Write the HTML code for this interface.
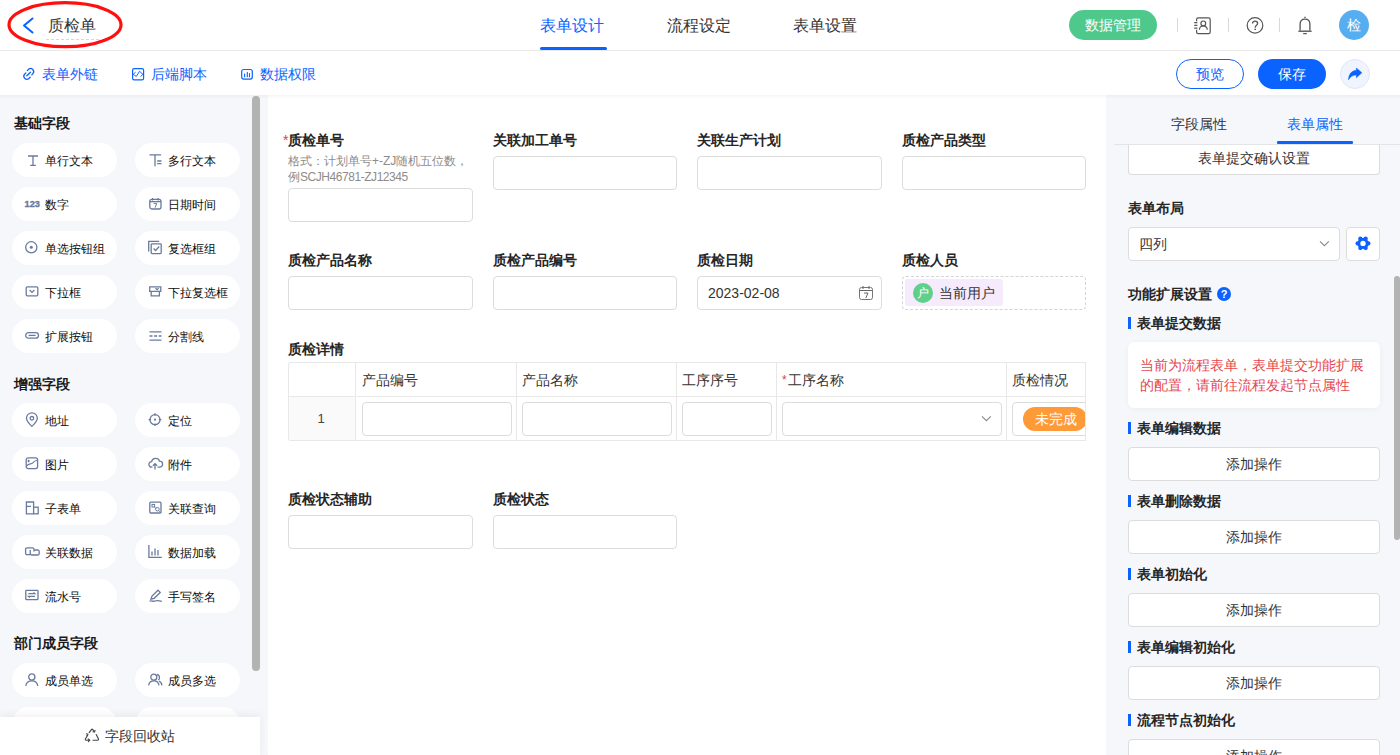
<!DOCTYPE html>
<html><head><meta charset="utf-8">
<style>
*{box-sizing:border-box;margin:0;padding:0}
html,body{width:1400px;height:755px;overflow:hidden;background:#fff;font-family:"Liberation Sans",sans-serif;color:#333}
.a{position:absolute;white-space:nowrap}
svg{position:absolute;overflow:visible}
#hdr{position:absolute;left:0;top:0;width:1400px;height:51px;background:#fff;border-bottom:1px solid #ececec}
#tb{position:absolute;left:0;top:51px;width:1400px;height:44px;background:#fff;z-index:3;box-shadow:0 1px 4px rgba(0,0,0,0.06)}
#left{position:absolute;left:0;top:95px;width:268px;height:660px;background:#f5f7fb;overflow:hidden}
#canvas{position:absolute;left:268px;top:95px;width:838px;height:660px;background:#fff;overflow:hidden}
#right{position:absolute;left:1106px;top:95px;width:294px;height:660px;background:#f5f7fb;overflow:hidden}
.t16{font-size:16px;line-height:20px;height:20px}
.t14{font-size:14px;line-height:20px;height:20px}
.t12{font-size:12px;line-height:16px;height:16px}
.b{font-weight:bold}
.blue{color:#0a62ff}
.pill{position:absolute;width:105px;height:34px;border-radius:17px;background:#fff}
.pill span{position:absolute;left:33px;top:10px;font-size:12px;line-height:16px;color:#0d0d0d;white-space:nowrap}
.pill svg{left:0;top:0}
.inp{position:absolute;height:34px;border:1px solid #dcdcdc;border-radius:4px;background:#fff}
.lbl{position:absolute;font-size:14px;line-height:20px;font-weight:bold;color:#262626;white-space:nowrap}
.btn{position:absolute;left:22px;width:252px;height:34px;border:1px solid #dcdcdc;border-radius:4px;background:#fff;font-size:14px;line-height:32px;text-align:center;color:#333}
.sec{position:absolute;left:22px;font-size:14px;line-height:20px;font-weight:bold;color:#262626;padding-left:9px;white-space:nowrap}
.sec:before{content:"";position:absolute;left:0;top:4px;width:3px;height:12px;background:#0a62ff}
</style></head><body>

<!-- HEADER -->
<div id="hdr">
  <svg width="130" height="52" style="left:0;top:0">
    <ellipse cx="65" cy="24.7" rx="56" ry="22" fill="none" stroke="#ff1010" stroke-width="3.2"/>
    <path d="M32.5 18.5 L24 25.5 L32.5 32.5" fill="none" stroke="#0a62ff" stroke-width="2" stroke-linecap="round" stroke-linejoin="round"/>
    <line x1="46" y1="39.5" x2="102" y2="39.5" stroke="#d8d8d8" stroke-width="1" stroke-dasharray="3 2"/>
  </svg>
  <div class="a t16" style="left:48px;top:16px;color:#333">质检单</div>

  <div class="a t16 blue" style="left:540px;top:16px">表单设计</div>
  <div style="position:absolute;left:540px;top:47px;width:67px;height:3px;border-radius:2px;background:#0a62ff"></div>
  <div class="a t16" style="left:667px;top:16px;color:#333">流程设定</div>
  <div class="a t16" style="left:793px;top:16px;color:#333">表单设置</div>

  <div style="position:absolute;left:1069px;top:10px;width:88px;height:30px;border-radius:15px;background:#4ec98b"></div>
  <div class="a t14" style="left:1085px;top:15px;color:#fff">数据管理</div>
  <div style="position:absolute;left:1177px;top:18px;width:1px;height:14px;background:#d8d8d8"></div>
  <div style="position:absolute;left:1228px;top:18px;width:1px;height:14px;background:#d8d8d8"></div>
  <div style="position:absolute;left:1279px;top:18px;width:1px;height:14px;background:#d8d8d8"></div>
  <!-- contact book -->
  <svg width="20" height="20" style="left:1193px;top:16px">
    <path d="M3.6 5.2V3.4A1.6 1.6 0 0 1 5.2 1.8H15.6A1.6 1.6 0 0 1 17.2 3.4V16A1.6 1.6 0 0 1 15.6 17.6H5.2A1.6 1.6 0 0 1 3.6 16V13.8" fill="none" stroke="#555" stroke-width="1.2"/>
    <path d="M1.2 6.6h3.2M1.2 9.4h3.2M1.2 12.2h3.2" stroke="#555" stroke-width="1.2"/>
    <circle cx="10.3" cy="7.4" r="2.4" fill="none" stroke="#555" stroke-width="1.2"/>
    <path d="M6.4 13.8A3.95 3.95 0 0 1 14.3 13.8" fill="none" stroke="#555" stroke-width="1.2"/>
  </svg>
  <!-- help -->
  <svg width="20" height="20" style="left:1245px;top:16px">
    <circle cx="10" cy="9.4" r="7.8" fill="none" stroke="#555" stroke-width="1.2"/>
    <path d="M7.5 7.6C7.5 5.9 8.6 5.2 10 5.2C11.5 5.2 12.6 6.1 12.6 7.4C12.6 9.2 10.2 9.5 10.2 11.7" fill="none" stroke="#555" stroke-width="1.3"/>
    <path d="M9.4 13.4H11" stroke="#555" stroke-width="1.3"/>
  </svg>
  <!-- bell -->
  <svg width="20" height="20" style="left:1295px;top:15px">
    <path d="M9.3 2.4H10.7" stroke="#555" stroke-width="1.3"/>
    <path d="M5.1 15.6V9.2C5.1 6.1 7.1 4.2 10 4.2C12.9 4.2 14.9 6.1 14.9 9.2V15.6" fill="none" stroke="#555" stroke-width="1.3"/>
    <path d="M3.4 16.2H16.6" stroke="#555" stroke-width="1.4"/>
    <path d="M8.2 18.6H11.8" stroke="#555" stroke-width="1.2"/>
  </svg>
  <div style="position:absolute;left:1339px;top:10px;width:30px;height:30px;border-radius:15px;background:#56aef1"></div>
  <div class="a t14" style="left:1347px;top:15px;color:#fff">检</div>
</div>

<!-- TOOLBAR -->
<div id="tb">
  <svg width="14" height="14" style="left:22px;top:16px">
    <path d="M5.3 3.6L6.6 2.3A3.05 3.05 0 0 1 10.9 6.6L9.8 7.9M3.9 5.9L2.6 7.2A3.05 3.05 0 0 0 6.9 11.5L8.2 10.2M8.5 5.2L4.8 8.8" fill="none" stroke="#0a62ff" stroke-width="1.3" stroke-linecap="round"/>
  </svg>
  <div class="a t14 blue" style="left:42px;top:13px">表单外链</div>
  <svg width="14" height="14" style="left:131px;top:16px">
    <rect x="1.6" y="1.6" width="11" height="11.2" rx="1.6" fill="none" stroke="#0a62ff" stroke-width="1.2"/>
    <path d="M4.6 5.2L2.2 7.3L5.3 9.5L8.5 4.3L12 7.3L9.5 9.5" fill="none" stroke="#0a62ff" stroke-width="0.95" stroke-linejoin="round"/>
  </svg>
  <div class="a t14 blue" style="left:151px;top:13px">后端脚本</div>
  <svg width="14" height="14" style="left:240px;top:16px">
    <rect x="1.7" y="2.5" width="10.6" height="9.6" rx="2" fill="none" stroke="#0a62ff" stroke-width="1.2"/>
    <path d="M4.6 7.1v2.6M7.3 5.2v4.5M9.5 6.6v3.1" stroke="#0a62ff" stroke-width="1.1" stroke-linecap="round"/>
  </svg>
  <div class="a t14 blue" style="left:260px;top:13px">数据权限</div>

  <div style="position:absolute;left:1176px;top:8px;width:68px;height:30px;border:1px solid #0a62ff;border-radius:15px;background:#fff"></div>
  <div class="a t14 blue" style="left:1196px;top:13px">预览</div>
  <div style="position:absolute;left:1258px;top:8px;width:68px;height:30px;border-radius:15px;background:#0a62ff"></div>
  <div class="a t14" style="left:1278px;top:13px;color:#fff">保存</div>
  <div style="position:absolute;left:1340px;top:8px;width:30px;height:30px;border-radius:15px;background:#f0f4ff;border:1px solid #dfe7fb"></div>
  <svg width="16" height="14" style="left:1347px;top:16px">
    <path d="M1.5 12.8C1.7 7.2 4.6 3.6 9.4 3.2V1.1L14.9 5.7L9.4 10.8V8C5.6 8 3.2 9.8 1.5 12.8Z" fill="#0a62ff" stroke="#0a62ff" stroke-width="0.5" stroke-linejoin="round"/>
  </svg>
</div>

<!-- LEFT PANEL -->
<div id="left">
  <div class="a t14 b" style="left:14px;top:18px;color:#1a1a1a">基础字段</div>
  <div class="pill" style="left:12px;top:48px"><svg width="16" height="16" style="left:13px;top:10px"><path d="M3 3h10M8 3v9.4M5.2 12.4h5.6" fill="none" stroke="#6a7a9e" stroke-width="1.3"/></svg><span>单行文本</span></div>
  <div class="pill" style="left:135px;top:48px"><svg width="16" height="16" style="left:14px;top:10px"><path d="M0.5 1.8h11.6M6 1.8v11.4M8.2 8h4.3M8.2 10.6h4.3" fill="none" stroke="#6a7a9e" stroke-width="1.3"/></svg><span>多行文本</span></div>
  <div class="pill" style="left:12px;top:92px"><svg width="16" height="16" style="left:12px;top:10px"><text x="0.6" y="9.9" font-family="Liberation Sans" font-weight="bold" font-size="9.2" fill="#6a7a9e" stroke="#6a7a9e" stroke-width="0.35">123</text></svg><span>数字</span></div>
  <div class="pill" style="left:135px;top:92px"><svg width="16" height="16" style="left:14px;top:10px"><rect x="0.8" y="2.4" width="11.2" height="9.6" rx="2" fill="none" stroke="#6a7a9e" stroke-width="1.3"/><path d="M0.8 4.6h11.2M3.6 1v2.5M9.2 1v2.5" fill="none" stroke="#6a7a9e" stroke-width="1.3"/><path d="M4.6 6.4h3.2l-1.7 4.2" fill="none" stroke="#6a7a9e" stroke-width="1"/></svg><span>日期时间</span></div>
  <div class="pill" style="left:12px;top:136px"><svg width="16" height="16" style="left:13px;top:10px"><circle cx="6.3" cy="6.3" r="5.6" fill="none" stroke="#6a7a9e" stroke-width="1.3"/><circle cx="6.3" cy="6.3" r="1.5" fill="#6a7a9e"/></svg><span>单选按钮组</span></div>
  <div class="pill" style="left:135px;top:136px"><svg width="16" height="16" style="left:14px;top:10px"><path d="M-0.3 10.5V0.3H10.2" fill="none" stroke="#6a7a9e" stroke-width="1.3"/><rect x="2.2" y="2.8" width="10" height="9.8" rx="0.8" fill="none" stroke="#6a7a9e" stroke-width="1.3"/><path d="M4.6 7.5l2 2l3.6-4" fill="none" stroke="#6a7a9e" stroke-width="1.3"/></svg><span>复选框组</span></div>
  <div class="pill" style="left:12px;top:180px"><svg width="16" height="16" style="left:13px;top:10px"><rect x="1.2" y="1.8" width="11.6" height="9" rx="1" fill="none" stroke="#6a7a9e" stroke-width="1.3"/><path d="M4.6 5l2.4 2.4l2.4-2.4" fill="none" stroke="#6a7a9e" stroke-width="1.3"/></svg><span>下拉框</span></div>
  <div class="pill" style="left:135px;top:180px"><svg width="16" height="16" style="left:14px;top:10px"><path d="M0.7 6.3V1.8H11.8V6.3H0.7Z" fill="none" stroke="#6a7a9e" stroke-width="1.3"/><path d="M2.2 6.3v4.5h8.2V6.3" fill="none" stroke="#6a7a9e" stroke-width="1.3"/><path d="M6.5 3.2l1.6 1.5l1.6-1.5" fill="none" stroke="#6a7a9e" stroke-width="1.3"/></svg><span>下拉复选框</span></div>
  <div class="pill" style="left:12px;top:224px"><svg width="16" height="16" style="left:13px;top:10px"><rect x="0.7" y="3.6" width="12.8" height="5.6" rx="2.8" fill="none" stroke="#6a7a9e" stroke-width="1.3"/><path d="M3.6 6.4h7" fill="none" stroke="#6a7a9e" stroke-width="1.3"/></svg><span>扩展按钮</span></div>
  <div class="pill" style="left:135px;top:224px"><svg width="16" height="16" style="left:14px;top:10px"><path d="M0.5 2.8h12M0.5 11.2h12" fill="none" stroke="#6a7a9e" stroke-width="1.3"/><path d="M0.5 7h12" fill="none" stroke="#6a7a9e" stroke-width="1.3" stroke-dasharray="3 1.6"/></svg><span>分割线</span></div>

  <div class="a t14 b" style="left:14px;top:279px;color:#1a1a1a">增强字段</div>
  <div class="pill" style="left:12px;top:308px"><svg width="16" height="16" style="left:13px;top:10px"><path d="M6.9 13.4C3.2 9.8 1.5 7.6 1.5 5.2A5.4 5.4 0 0 1 12.3 5.2C12.3 7.6 10.6 9.8 6.9 13.4Z" fill="none" stroke="#6a7a9e" stroke-width="1.3"/><circle cx="6.9" cy="5.3" r="1.8" fill="none" stroke="#6a7a9e" stroke-width="1.3"/></svg><span>地址</span></div>
  <div class="pill" style="left:135px;top:308px"><svg width="16" height="16" style="left:14px;top:10px"><circle cx="6" cy="6.7" r="5" fill="none" stroke="#6a7a9e" stroke-width="1.3"/><path d="M6 0.3v2.5M6 10.6v2.5M-0.4 6.7h2.5M9.9 6.7h2.5" fill="none" stroke="#6a7a9e" stroke-width="1.3"/><circle cx="6" cy="6.7" r="1.1" fill="#6a7a9e"/></svg><span>定位</span></div>
  <div class="pill" style="left:12px;top:352px"><svg width="16" height="16" style="left:13px;top:10px"><rect x="1.2" y="0.8" width="11.4" height="10.8" rx="2" fill="none" stroke="#6a7a9e" stroke-width="1.3"/><path d="M1.5 9.2C4 5.5 6 8 8 5.6S11 3.6 12.4 3.4M3.6 2.8v2.4M2.4 4h2.4" fill="none" stroke="#6a7a9e" stroke-width="1.1"/></svg><span>图片</span></div>
  <div class="pill" style="left:135px;top:352px"><svg width="16" height="16" style="left:14px;top:10px"><path d="M3.5 10.2H2.8A2.8 2.8 0 0 1 2.6 4.6A4.2 4.2 0 0 1 10.6 4.2A3 3 0 0 1 10.6 10.2H8.5" fill="none" stroke="#6a7a9e" stroke-width="1.3"/><path d="M6 12.5V6.8M3.9 8.7L6 6.6L8.1 8.7" fill="none" stroke="#6a7a9e" stroke-width="1.3"/></svg><span>附件</span></div>
  <div class="pill" style="left:12px;top:396px"><svg width="16" height="16" style="left:13px;top:10px"><path d="M8.6 12.8H1.4V1H8.6V6.2" fill="none" stroke="#6a7a9e" stroke-width="1.3"/><path d="M1.4 5.4h4.6" fill="none" stroke="#6a7a9e" stroke-width="1.3"/><rect x="8.6" y="6.2" width="4.6" height="6.6" fill="none" stroke="#6a7a9e" stroke-width="1.3"/></svg><span>子表单</span></div>
  <div class="pill" style="left:135px;top:396px"><svg width="16" height="16" style="left:14px;top:10px"><rect x="0.8" y="1.2" width="11.2" height="10.8" rx="1" fill="none" stroke="#6a7a9e" stroke-width="1.3"/><rect x="3" y="3.4" width="2.6" height="2.6" fill="none" stroke="#6a7a9e" stroke-width="1"/><circle cx="8.4" cy="8.2" r="1.8" fill="none" stroke="#6a7a9e" stroke-width="1"/><path d="M9.8 9.6L12 11.8M5.6 6.4L7 7.4" fill="none" stroke="#6a7a9e" stroke-width="1"/></svg><span>关联查询</span></div>
  <div class="pill" style="left:12px;top:440px"><svg width="16" height="16" style="left:13px;top:10px"><path d="M5 9.6H2A1.4 1.4 0 0 1 0.6 8.2V4.2A1.4 1.4 0 0 1 2 2.8H7.6A1.4 1.4 0 0 1 9 4.2V6.4" fill="none" stroke="#6a7a9e" stroke-width="1.3"/><path d="M9.2 5H12.8A1.4 1.4 0 0 1 14.2 6.4V8.6A1.4 1.4 0 0 1 12.8 10H6.6A1.4 1.4 0 0 1 5.2 8.6V5" fill="none" stroke="#6a7a9e" stroke-width="1.3"/></svg><span>关联数据</span></div>
  <div class="pill" style="left:135px;top:440px"><svg width="16" height="16" style="left:14px;top:10px"><path d="M-0.1 0V12.4H12.8" fill="none" stroke="#6a7a9e" stroke-width="1.3"/><path d="M3 6.5v4M6 3.5v7M9 5v5.5" fill="none" stroke="#6a7a9e" stroke-width="1.3"/></svg><span>数据加载</span></div>
  <div class="pill" style="left:12px;top:484px"><svg width="16" height="16" style="left:13px;top:10px"><rect x="0.8" y="1.3" width="12.2" height="9.4" rx="0.8" fill="none" stroke="#6a7a9e" stroke-width="1.3"/><path d="M3.4 4.6h6.6l-1.5-1.2M10 7.4H3.4l1.5 1.2" fill="none" stroke="#6a7a9e" stroke-width="1.1"/></svg><span>流水号</span></div>
  <div class="pill" style="left:135px;top:484px"><svg width="16" height="16" style="left:14px;top:10px"><path d="M2 10L3 7L9 1.2L11.2 3.4L5.2 9.3L2 10Z" fill="none" stroke="#6a7a9e" stroke-width="1.3"/><path d="M0.5 12.3C2.5 11 4 13 6 12C8 11 10 11.5 12.8 12.4" fill="none" stroke="#6a7a9e" stroke-width="1.3"/></svg><span>手写签名</span></div>

  <div class="a t14 b" style="left:14px;top:538px;color:#1a1a1a">部门成员字段</div>
  <div class="pill" style="left:12px;top:568px"><svg width="16" height="16" style="left:13px;top:10px"><circle cx="6.8" cy="4" r="3.1" fill="none" stroke="#6a7a9e" stroke-width="1.3"/><path d="M0.8 13C1.2 9.5 3.6 7.8 6.8 7.8S12.4 9.5 12.8 13" fill="none" stroke="#6a7a9e" stroke-width="1.3"/></svg><span>成员单选</span></div>
  <div class="pill" style="left:135px;top:568px"><svg width="16" height="16" style="left:14px;top:10px"><circle cx="4.8" cy="4.2" r="3" fill="none" stroke="#6a7a9e" stroke-width="1.3"/><path d="M-0.4 12.4C0 9.3 2 7.8 4.8 7.8S9.6 9.3 10 12.4" fill="none" stroke="#6a7a9e" stroke-width="1.3"/><path d="M7.8 1.5A3 3 0 0 1 9.2 7M10 8.2C11.6 8.8 12.6 10.3 12.9 12.4" fill="none" stroke="#6a7a9e" stroke-width="1.3"/></svg><span>成员多选</span></div>
  <div class="pill" style="left:12px;top:612px"></div>
  <div class="pill" style="left:135px;top:612px"></div>

  <div style="position:absolute;left:252px;top:1px;width:8px;height:575px;border-radius:4px;background:#b3b3b3"></div>

  <div style="position:absolute;left:0;top:622px;width:260px;height:40px;background:#fff;box-shadow:0 -2px 8px rgba(0,0,0,0.06)"></div>
  <svg width="16" height="16" style="left:84px;top:633px">
    <path d="M5.2 4.6L7.6 1.4C7.9 1 8.3 1 8.6 1.4L10.2 3.6M3.6 7.3L1.4 11C1.1 11.6 1.4 12.2 2.1 12.2H5.6M12.2 6.6L14.4 10.8C14.7 11.5 14.4 12.2 13.7 12.2H9" fill="none" stroke="#444" stroke-width="1.15" stroke-linecap="round" stroke-linejoin="round"/>
    <path d="M9 3.8L10.6 4L11 2.4M4.2 11L5.8 12.2L4.4 13.6M3 7.6L4 6.2L2.4 5.8" fill="none" stroke="#444" stroke-width="1.1" stroke-linecap="round" stroke-linejoin="round"/>
  </svg>
  <div class="a t14" style="left:105px;top:631px;color:#333">字段回收站</div>
</div>

<!-- CANVAS -->
<div id="canvas">
  <!-- row1 -->
  <div class="a" style="left:15px;top:38px;font-size:14px;line-height:14px;color:#e23b3b">*</div>
  <div class="lbl" style="left:20px;top:35px">质检单号</div>
  <div class="a t12" style="left:20px;top:58px;color:#8c8c8c">格式：计划单号+-ZJ随机五位数，</div>
  <div class="a t12" style="left:20px;top:74px;color:#8c8c8c">例<span style="letter-spacing:-0.45px">SCJH46781-ZJ12345</span></div>
  <div class="inp" style="left:20px;top:93px;width:185px"></div>
  <div class="lbl" style="left:225px;top:35px">关联加工单号</div>
  <div class="inp" style="left:225px;top:61px;width:184px"></div>
  <div class="lbl" style="left:429px;top:35px">关联生产计划</div>
  <div class="inp" style="left:429px;top:61px;width:185px"></div>
  <div class="lbl" style="left:634px;top:35px">质检产品类型</div>
  <div class="inp" style="left:634px;top:61px;width:184px"></div>
  <!-- row2 -->
  <div class="lbl" style="left:20px;top:155px">质检产品名称</div>
  <div class="inp" style="left:20px;top:181px;width:185px"></div>
  <div class="lbl" style="left:225px;top:155px">质检产品编号</div>
  <div class="inp" style="left:225px;top:181px;width:184px"></div>
  <div class="lbl" style="left:429px;top:155px">质检日期</div>
  <div class="inp" style="left:429px;top:181px;width:185px"></div>
  <div class="a" style="left:440px;top:188px;font-size:14px;line-height:20px;color:#333">2023-02-08</div>
  <svg width="16" height="16" style="left:590px;top:190px">
    <rect x="1.5" y="2.5" width="13" height="12" rx="2" fill="none" stroke="#666" stroke-width="0.9"/>
    <path d="M1.5 5.5h13M5 1v3M11 1v3" stroke="#666" stroke-width="1"/>
    <path d="M6 8h4l-2.2 5" fill="none" stroke="#666" stroke-width="1"/>
  </svg>
  <div class="lbl" style="left:634px;top:155px">质检人员</div>
  <div style="position:absolute;left:634px;top:181px;width:184px;height:34px;border:1px dashed #d4d4d4;border-radius:4px"></div>
  <div style="position:absolute;left:637px;top:184px;width:98px;height:27px;border-radius:3px;background:#f6eafd"></div>
  <div style="position:absolute;left:645px;top:188px;width:20px;height:20px;border-radius:10px;background:#5fd08b"></div>
  <div class="a" style="left:649px;top:190px;font-size:12px;line-height:16px;color:#fff">户</div>
  <div class="a t14" style="left:671px;top:188px;color:#333">当前用户</div>
  <!-- row3 table -->
  <div class="lbl" style="left:20px;top:244px">质检详情</div>
  <div style="position:absolute;left:20px;top:267px;width:798px;height:79px;border:1px solid #e8e8e8;border-right:none;border-radius:3px 0 0 3px;overflow:hidden">
    <div style="position:absolute;left:0;top:34px;width:66px;height:44px;background:#fafafa"></div>
    <div style="position:absolute;left:0;top:33px;width:66px;height:1px;background:#e8e8e8"></div>
    <div style="position:absolute;left:68px;top:33px;width:800px;height:1px;background:#e8e8e8"></div>
    <div style="position:absolute;left:66px;top:0;width:1px;height:79px;background:#e8e8e8"></div>
    <div style="position:absolute;left:227px;top:0;width:1px;height:79px;background:#e8e8e8"></div>
    <div style="position:absolute;left:387px;top:0;width:1px;height:79px;background:#e8e8e8"></div>
    <div style="position:absolute;left:487px;top:0;width:1px;height:79px;background:#e8e8e8"></div>
    <div style="position:absolute;left:717px;top:0;width:1px;height:79px;background:#e8e8e8"></div>
  </div>
  <div class="a t14" style="left:94px;top:275px">产品编号</div>
  <div class="a t14" style="left:254px;top:275px">产品名称</div>
  <div class="a t14" style="left:414px;top:275px">工序序号</div>
  <div class="a" style="left:514px;top:279px;font-size:12px;line-height:12px;color:#e23b3b">*</div>
  <div class="a t14" style="left:520px;top:275px">工序名称</div>
  <div class="a t14" style="left:744px;top:275px">质检情况</div>
  <div class="a" style="left:48px;top:316px;width:10px;text-align:center;font-size:13px;line-height:16px;color:#444">1</div>
  <div class="inp" style="left:94px;top:307px;width:150px"></div>
  <div class="inp" style="left:254px;top:307px;width:150px"></div>
  <div class="inp" style="left:414px;top:307px;width:90px"></div>
  <div class="inp" style="left:514px;top:307px;width:220px"></div>
  <svg width="12" height="8" style="left:713px;top:320px"><path d="M1 1.3 L5.4 5.7 L9.8 1.3" fill="none" stroke="#8a8a8a" stroke-width="1.1"/></svg>
  <div style="position:absolute;left:744px;top:307px;width:74px;height:34px;overflow:hidden">
    <div class="inp" style="left:0;top:0;width:120px"></div>
    <div style="position:absolute;left:11px;top:5px;width:64px;height:24px;border-radius:12px;background:#ff9a38"></div>
    <div class="a t14" style="left:23px;top:7px;color:#fff">未完成</div>
  </div>
  <div style="position:absolute;left:817px;top:267px;width:1px;height:79px;background:#e8e8e8;border-radius:0 3px 0 0"></div>
  <!-- row4 -->
  <div class="lbl" style="left:20px;top:394px">质检状态辅助</div>
  <div class="inp" style="left:20px;top:420px;width:185px"></div>
  <div class="lbl" style="left:225px;top:394px">质检状态</div>
  <div class="inp" style="left:225px;top:420px;width:184px"></div>
</div>

<!-- RIGHT PANEL -->
<div id="right">
  <div style="position:absolute;left:22px;top:50px;width:252px;height:30px;border:1px solid #dcdcdc;border-top:none;border-radius:0 0 4px 4px;background:#fff"></div>
  <div class="a t14" style="left:92px;top:53px;color:#333">表单提交确认设置</div>
  <div style="position:absolute;left:8px;top:0;width:286px;height:50px;background:#f5f7fb;border-bottom:1px solid #e3e4e8"></div>
  <div class="a t14" style="left:65px;top:19px;color:#333">字段属性</div>
  <div class="a t14 blue" style="left:181px;top:19px">表单属性</div>
  <div style="position:absolute;left:171px;top:46px;width:76px;height:3px;background:#0a62ff;border-radius:1px"></div>

  <div class="lbl" style="left:22px;top:103px">表单布局</div>
  <div style="position:absolute;left:22px;top:132px;width:212px;height:34px;border:1px solid #dddddd;border-radius:4px;background:#fff"></div>
  <div class="a t14" style="left:33px;top:139px;color:#333">四列</div>
  <svg width="12" height="8" style="left:213px;top:145px"><path d="M1 1.3 L5.4 5.7 L9.8 1.3" fill="none" stroke="#8a8a8a" stroke-width="1.1"/></svg>
  <div style="position:absolute;left:240px;top:132px;width:34px;height:34px;border:1px solid #dddddd;border-radius:4px;background:#fff"></div>
  <svg width="16" height="16" style="left:249px;top:140px">
    <circle cx="8" cy="8.4" r="5.6" fill="#0a62ff"/><circle cx="13.40" cy="8.40" r="2.1" fill="#0a62ff"/><circle cx="10.70" cy="13.08" r="2.1" fill="#0a62ff"/><circle cx="5.30" cy="13.08" r="2.1" fill="#0a62ff"/><circle cx="2.60" cy="8.40" r="2.1" fill="#0a62ff"/><circle cx="5.30" cy="3.72" r="2.1" fill="#0a62ff"/><circle cx="10.70" cy="3.72" r="2.1" fill="#0a62ff"/>
    <circle cx="8" cy="8.4" r="2.7" fill="#fff"/>
  </svg>

  <div class="lbl" style="left:22px;top:189px">功能扩展设置</div>
  <div style="position:absolute;left:111px;top:192px;width:14px;height:14px;border-radius:7px;background:#0a62ff;color:#fff;font-size:11px;line-height:14px;text-align:center;font-weight:bold">?</div>
  <div class="sec" style="top:218px">表单提交数据</div>
  <div style="position:absolute;left:22px;top:247px;width:252px;height:66px;border-radius:6px;background:#fff;box-shadow:0 1px 6px rgba(0,0,0,0.04)"></div>
  <div class="a" style="left:34px;top:261px;font-size:14px;line-height:19.5px;color:#e5474f;white-space:normal;width:232px">当前为流程表单，表单提交功能扩展的配置，请前往流程发起节点属性</div>
  <div class="sec" style="top:323px">表单编辑数据</div>
  <div class="btn" style="top:352px">添加操作</div>
  <div class="sec" style="top:396px">表单删除数据</div>
  <div class="btn" style="top:425px">添加操作</div>
  <div class="sec" style="top:469px">表单初始化</div>
  <div class="btn" style="top:498px">添加操作</div>
  <div class="sec" style="top:542px">表单编辑初始化</div>
  <div class="btn" style="top:571px">添加操作</div>
  <div class="sec" style="top:615px">流程节点初始化</div>
  <div class="btn" style="top:644px">添加操作</div>
  <div style="position:absolute;left:288px;top:181px;width:6px;height:264px;border-radius:3px;background:#b3b3b3"></div>
</div>

</body></html>
